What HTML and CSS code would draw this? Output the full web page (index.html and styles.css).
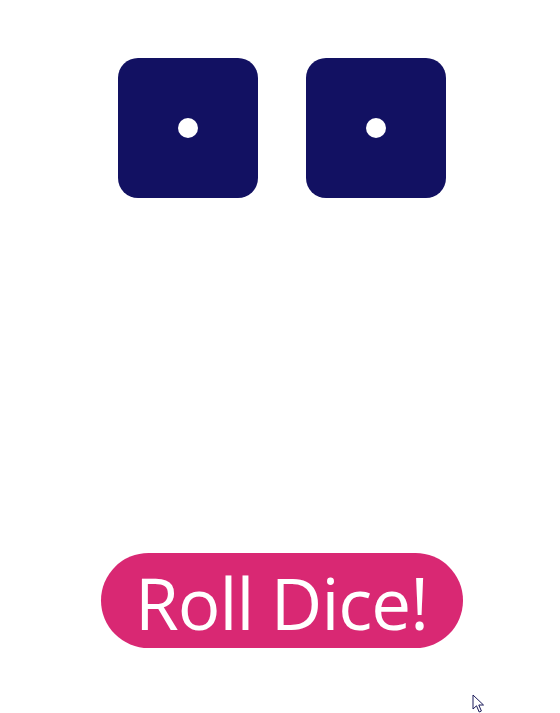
FILE: index.html
```html
<!DOCTYPE html>
<html>
<head>
<meta charset="utf-8">
<link rel="stylesheet" href="styles.css">
</head>
<body>
<main class="app">
  <div class="dice-row">
    <div class="die"><span class="pip"></span></div>
    <div class="die"><span class="pip"></span></div>
  </div>
  <button class="roll-btn">Roll Dice!</button>
</main>
<svg class="cursor" width="14" height="20" viewBox="0 0 14 20">
  <path d="M1 1 L1 15 L4.5 11.8 L7.2 18 L9.4 17 L6.8 11 L11.5 11 Z" fill="#fff" stroke="#1a1a5a" stroke-width="1"/>
</svg>
</body>
</html>
```
FILE: styles.css
```css
html, body {
  margin: 0;
  padding: 0;
  background: #ffffff;
  width: 560px;
  height: 713px;
  overflow: hidden;
}
.app {
  display: flex;
  flex-direction: column;
  align-items: center;
  padding-top: 58px;
  padding-left: 3px;
}
.dice-row {
  display: flex;
  gap: 48px;
}
.die {
  width: 140px;
  height: 140px;
  background: #121162;
  border-radius: 20px;
  display: flex;
  align-items: center;
  justify-content: center;
}
.pip {
  width: 20px;
  height: 20px;
  border-radius: 50%;
  background: #ffffff;
}
.roll-btn {
  margin-top: 355px;
  width: 362px;
  height: 95px;
  border: none;
  border-radius: 48px;
  background: #d92873;
  color: #ffffff;
  font-family: "Open Sans", "Noto Sans", sans-serif;
  font-weight: 400;
  font-size: 71px;
  letter-spacing: -1px;
  line-height: 1;
  padding: 4px 0 0 0;
  display: flex;
  align-items: center;
  justify-content: center;
}
.cursor {
  position: absolute;
  left: 472px;
  top: 694px;
}
```
